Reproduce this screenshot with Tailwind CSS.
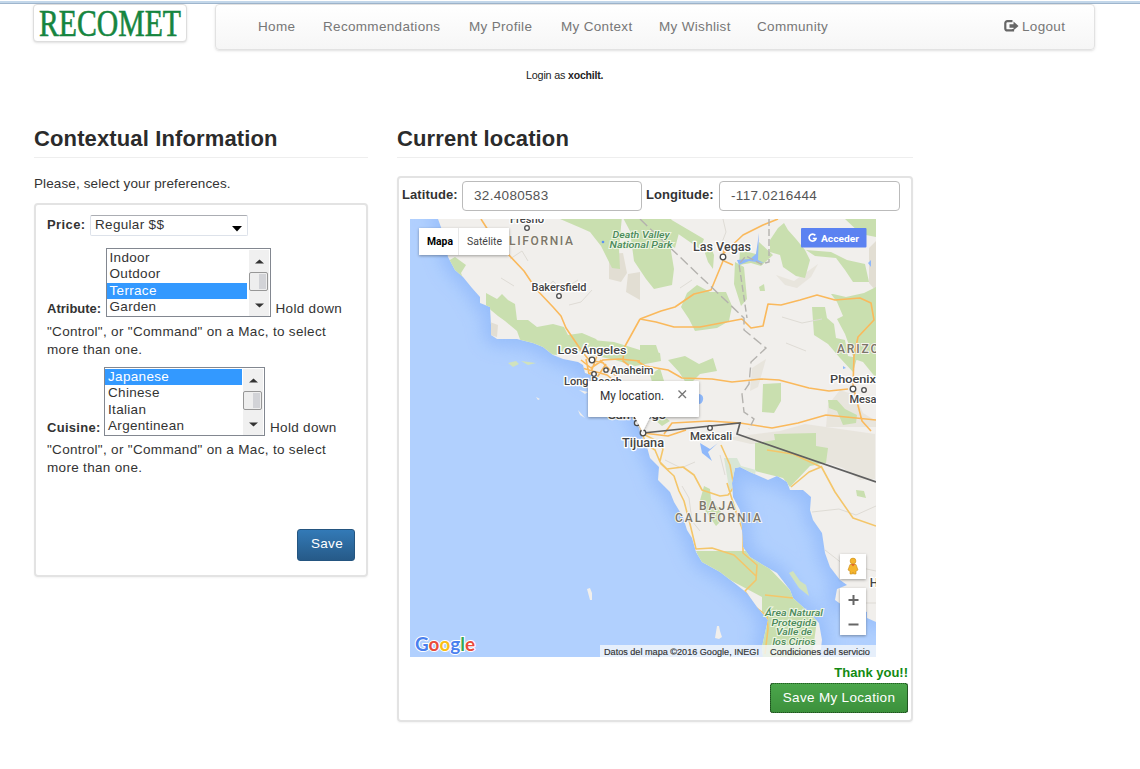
<!DOCTYPE html>
<html lang="en">
<head>
<meta charset="utf-8">
<title>Recomet</title>
<script src="https://cdn.jsdelivr.net/npm/@tailwindcss/browser@4"></script>
</head>
<body class="h-[769px] overflow-hidden bg-white font-['Liberation_Sans',Arial,sans-serif] text-[13.5px] leading-[18px] tracking-[0.32px] text-[#333]">
<div class="mt-px h-[3px] border-b border-[#9fb6cd] bg-[#c3d7ea]"></div>
<header class="flex items-start pl-[33px]">
  <div class="flex h-[38px] w-[154px] items-center justify-center rounded border border-[#ddd] bg-white shadow-sm">
    <svg class="shrink-0 overflow-visible" width="150" height="36" viewBox="0 0 150 36" aria-label="RECOMET"><text x="4" y="30.500" textLength="142" lengthAdjust="spacingAndGlyphs" font-family="Liberation Serif, serif" font-size="38" letter-spacing="0" fill="#16853f" stroke="#16853f" stroke-width=".6">RECOMET</text></svg>
  </div>
  <nav class="ml-[28px] flex h-[46px] w-[880px] items-center rounded border border-[#e2e2e2] bg-linear-to-b from-white to-[#f6f6f6] pl-[42px] text-[#777] shadow-sm shadow-black/10">
    <a class="w-[65px]">Home</a>
    <a class="w-[146px]">Recommendations</a>
    <a class="w-[92px]">My Profile</a>
    <a class="w-[98px]">My Context</a>
    <a class="w-[98px]">My Wishlist</a>
    <a class="w-[247px]">Community</a>
    <svg class="mb-[2px] mr-[3px]" width="15" height="12" viewBox="0 0 15 12"><path d="M8.500 1.200H3.500Q1.300 1.200 1.300 3.200v5.200Q1.300 10.400 3.500 10.400h5.500V9" fill="none" stroke="#666" stroke-width="2.200"/><path d="M5.500 4.300h4V1.500L14.500 6l-5 4.300V7.700h-4z" fill="#666"/></svg>
    <a>Logout</a>
  </nav>
</header>
<p class="ml-[526px] mt-[16px] h-[18px] text-[10.800px] leading-[18px] tracking-[-0.2px] text-[#222]">Login as <b class="text-[10.500px]">xochilt.</b></p>
<main class="flex gap-[29px] pl-[34px] pt-[40px]">
  <section class="w-[334px]">
    <h2 class="h-[34px] border-b border-[#eee] pt-[2px] text-[22px] font-bold leading-[26px] tracking-[0.130px] text-[#2b2b2b]">Contextual Information</h2>
    <p class="mt-[17px] tracking-[0.120px]">Please, select your preferences.</p>
    <form class="mt-[10px] flex h-[374px] flex-col rounded border-2 border-[#e3e3e3] pl-[11px] pr-[11px] pt-[10px] shadow-xs">
      <div class="flex h-[22px]">
        <b class="w-[43px] whitespace-nowrap pt-px text-[13px] tracking-[0.4px]">Price:</b>
        <div class="flex h-[21px] w-[158px] justify-between rounded-xs border border-[#dde2ea] border-t-[#abadb3] pl-[4px] pr-[5px]"><span>Regular $$</span>
          <svg class="mt-[10px]" width="10" height="6"><path d="M0 0h10L5 5.500z" fill="#000"/></svg></div>
      </div>
      <div class="mt-[11px] flex items-end">
        <b class="-mb-px w-[58.500px] whitespace-nowrap text-[13px] tracking-[0px]">Atribute:</b>
        <div class="flex h-[69px] w-[165px] border border-[#828790] pt-px leading-[16.400px]">
          <div class="w-[140px]"><p class="pl-[3px]">Indoor</p><p class="pl-[3px]">Outdoor</p><p class="bg-[#3399ff] pl-[3px] text-white">Terrace</p><p class="pl-[3px]">Garden</p></div>
          <svg class="ml-[2px]" width="20" height="66"><path d="M0 0h20v66H0z" fill="#f0f0f0"/><path d="M6 13.500l4.500-4 4.500 4zM6 53.500l4.500 4 4.500-4z" fill="#333"/><rect x=".5" y="22.500" width="18" height="18" rx="1.500" fill="#eee" stroke="#979797"/><path d="M10 24h7v15h-7z" fill="#d2d3d7"/></svg>
        </div>
        <span class="-mb-px ml-[5px]">Hold down</span>
      </div>
      <p class="mt-[6px] w-[310px]">"Control", or "Command" on a Mac, to select<br>more than one.</p>
      <div class="mt-[8px] flex items-end">
        <b class="-mb-px w-[57px] whitespace-nowrap text-[13px] tracking-[0.3px]">Cuisine:</b>
        <div class="flex h-[69px] w-[161px] border border-[#828790] pt-px leading-[16.400px]">
          <div class="w-[137px]"><p class="bg-[#3399ff] pl-[3px] text-white">Japanese</p><p class="pl-[3px]">Chinese</p><p class="pl-[3px]">Italian</p><p class="pl-[3px]">Argentinean</p></div>
          <svg class="ml-[1px]" width="20" height="66"><path d="M0 0h20v66H0z" fill="#f0f0f0"/><path d="M6 13.500l4.500-4 4.500 4zM6 53.500l4.500 4 4.500-4z" fill="#333"/><rect x=".5" y="22.500" width="18" height="18" rx="1.500" fill="#eee" stroke="#979797"/><path d="M10 24h7v15h-7z" fill="#d2d3d7"/></svg>
        </div>
        <span class="-mb-px ml-[5px]">Hold down</span>
      </div>
      <p class="mt-[5px] w-[310px]">"Control", or "Command" on a Mac, to select<br>more than one.</p>
      <button type="button" class="mt-[52px] h-[32px] w-[58px] self-end rounded-[3px] border border-[#245580] bg-linear-to-b from-[#337ab7] to-[#265a88] pb-[2px] pl-[2px] text-white">Save</button>
    </form>
  </section>
  <section class="w-[516px]">
    <h2 class="h-[34px] border-b border-[#eee] pt-[2px] text-[22px] font-bold leading-[26px] tracking-[0.130px] text-[#2b2b2b]">Current location</h2>
    <div class="mt-[18px] h-[546px] rounded border-2 border-[#e3e3e3] pl-[4px] pt-[3px] shadow-xs">
      <div class="flex">
        <b class="-ml-px w-[60px] whitespace-nowrap pt-[5px] text-[13px] tracking-[0.1px]">Latitude:</b>
        <div class="h-[30px] w-[180px] rounded border border-[#bbb] pl-[11px] pt-[5px] text-[#555]">32.4080583</div>
        <b class="ml-[4px] w-[73px] whitespace-nowrap pt-[5px] text-[13px] tracking-[0.05px]">Longitude:</b>
        <div class="h-[30px] w-[181px] rounded border border-[#bbb] pl-[11px] pt-[5px] text-[#555]">-117.0216444</div>
      </div>
      <svg class="ml-[7px] mt-[8px] block" width="466" height="438" viewBox="410 219 466 438" letter-spacing="0" font-family="Roboto, sans-serif">
        <defs>
          <filter id="soft" x="-20%" y="-20%" width="140%" height="140%"><feGaussianBlur stdDeviation="9"/></filter>
          <filter id="drop" x="-20%" y="-20%" width="140%" height="150%"><feDropShadow dx="0" dy="1" stdDeviation="1.500" flood-opacity=".35"/></filter>
          <path id="land" d="M438 219L442 230 448 257 455 270 463 277 472 288 480 297 480 303 490 307 491 325 491 335 497 339 517 339 533 343 543 347 553 355 563 359 578 362 583 365 585 373 597 377 612 389 624 402 635 418 641 434 647 447 650 458 659 467 658 480 664 486 670 492 674 502 677 507 683 517 687 530 692 538 696 552 702 562 720 572 733 582 747 593 757 607 768 620 765 633 762 647 763 657H820L822 640 819 623 813 617 803 607 793 598 790 590 777 573 763 565 750 557 743 547 742 530 740 510 733 497 732 483 735 468 740 467 750 472 768 480 777 476 787 482 790 490 803 490 811 497 810 510 813 520 822 533 825 553 830 567 840 580 847 585 837 589 835 600 842 605 867 612 867 618 876 622V219z"/>
          <clipPath id="landclip"><use href="#land"/></clipPath>
        </defs>
        <path fill="#b1d0fe" d="M410 219h466v438H410z"/>
        <use href="#land" fill="#8fb8fa" stroke="#8fb8fa" stroke-width="14" filter="url(#soft)" opacity=".8"/>
        <use href="#land" fill="#f1efec"/>
        <g clip-path="url(#landclip)">
          <g fill="#e2ded3">
            <path d="M609 254l14-1 4 20-6 9-12-3zM628 274l12-2v28l-14-8zM490 322l8 3-1 12-7-2zM869 248l7-7v50l-7-8z"/>
            <path opacity=".6" d="M776 275l18 6 24-17-7 13-14 11-12-3zM828 405l12-15 15 5 8 18 13 8v6h-50zM752 368l14-9-8 28-8 4zM725 438l55-7 25-7 70 10v45l-15 1-17-12-20-6-12-20-60 2z"/>
          </g>
          <g fill="#c9dfaf">
            <path d="M560 219l80 0 30 0 34 20-4 10-26-18-4 14 4 24-2 16-18 4-8-10-12-18-4-30-8-15-3 33 1 20-8-1-11-22-11-14-9-4z"/>
            <path d="M641 219h30l8 14-4 15-24-16zM455 257l11 8-5 8 4 10-9-8-8-14zM486 293l11 6 5-5 6 6 7 4 2 16 11 0 9 7 16-3 11 3 4 8 14-2 14 6 6 7-11 9-19-6-14 6-27-2-21-6 12-2-5-14-12-10-7-5-12-10z"/>
            <path d="M583 345l9-5 22 2 26 8 20 3 1 8-26 5-20-6-23-5zM681 307l6-14 10-8 13 7 16 0 6 14-3 15-12 7-22 3-6-12zM705 253l5-8 4 10-1 14-5-7zM735 262l9 5 3 32-6 7-7-22zM740 250l16 4 3-12 14 13-12 11-10-3-12 2zM770 240l8-12 6-5 4 7 8 9 9 11 5 10-5 18-9-2-13-9-3-12-10-3zM806 250l25 2 16 8 18 4 4 18-16 0-8-12-9-12-21-2zM845 219h31v18l-15-3zM759 287l5-3 1 7-5 0z"/>
            <path d="M833 294l13 3 18-4 12-6v91l-13-16-9-3-9-25-8-15 6-3-6-14-6-8zM812 307l13 0 2 11 7 6 2 14 9 2 3 16 9 2-4 14-13-14-12-14-14-9z"/>
            <path d="M668 360l17-4 14 8 14-6 4 13-17 3-12 12-9-14zM640 345l16 0 4 12-20 3zM763 384l18-1v18l-7 12-12-1zM828 400l9 0 8 9 12 6-1 8-13 2-6-14-8-3zM650 375l10-7 4 13 9 5-7 10-9 3zM655 420l8-4 7 5-8 5z"/>
            <path d="M755 443l20-3-1-6 42-1v13l12 2-2 15-16 3-20 21-7-9-28-7zM856 490l8 1 2 7-9-2zM704 486l6 3 1 10 10 13 0 9-5 5-9-13-8-9z"/>
            <path d="M696 551h52l20 16 24 25 12 13 13 15-5 37-50 0v-60l-60-32z"/>
          </g>
          <path fill="#d8e6d5" d="M724 458h13l4 8 15 4-2 9-16-10-2 28-7-9z"/>
          <g fill="none" stroke="#dedbd5" stroke-width="1">
            <path d="M510 259l12-8 6 10M545 290l8-9 9 9 16-10M569 305l12-3 11-12M501 278l13 8M723 219l3 13-5 13M680 288l12-8M782 317l20 6 20-4M786 343l20 8M665 460l16 8 14-6M682 486l7 12 3 23 8 10M720 455l5 20M812 512l27-3 17 6 20-9M825 550l18 14 33 7M840 603h36"/>
          </g>
          <g fill="none" stroke="#fab95c" stroke-width="1.600" stroke-linejoin="round">
            <path d="M481 219l7 11 20 24 16 17 12 18 17 18 8 9 5 12 15 22 8 10 15 3M581 360l10 8 12-8 16-1 21 2M590 375l8-22M596 379l10-15M582 368l25 7 16 13M586 359l4 20M600 360l24 24M640 319l-16 29-1 13 8 6M640 319l21-8 14-4 19-13 17-4 12-29 1-16M724 261l9 4M724 253l19-18 20-10 15-6M640 319l16 3 18 5 26 0 42-8 9 9 12-2 5-22 13 1 19-5 17-5 18 5 25-2 11 5 3 17-16 17-4 19-1 30 9 35 9 10M637 361l8 5 23 4 14 8 30 1 20 3 29-3 18 1 30 8 20 3 19-2M664 434l8-11 37-2 31 2 32 5 26-5 28-8 50 5M628 405l9 14 6 14 25 3 18-6"/>
            <path stroke="#f4c66a" d="M641 430l5 14 9 6 5 12 7 7 16-2 11 8 8 15 18 6 8-1 6-8-4-22-9-20M645 435l12 6 6 8-3 12M727 483l8 26 8 22 0 22 14 12-1 15-11 11 9 15 13 10 1 13-3 25M660 463l14 13 5 15 5 10 7 27 5 21 16-1 22 7 22 21M765 595l28 3M767 450l26 4 28 13-12 5-18 15M821 466l14 26 18 26 23 8"/>
          </g>
          <g fill="#8fb8fa"><path d="M737 260l13-1 6-5 3-21-1 27 6 3-15-2-10 4zM744 284l2 10M868 263l3-3v7zM700 443l10 6 8-6-10 9 4 9-10-8zM699 394q5 1 4 6-1 4-4 4zM843 366l3 2-3 1z"/></g>
          <g fill="none" stroke="#b4b2ae" stroke-width="1.400"><path stroke-dasharray="10 4" d="M640 219l104 99 0 12 22 18-15 14-2 22-7 10 2 18 10 7-5 10"/><path stroke-dasharray="7 3" d="M769 219v43l-8 2-15-8-7 8 8 54"/></g>
        </g>
        <g fill="none" stroke="#5f5f5f" stroke-width="1.700"><path d="M643 433l97-10-3 11 139 48"/></g>
        <path fill="#d0e2bd" d="M508 363l8-2 3 3-6 3zM521 361l15 2-8 2zM789 573l4-2 7 10 6 4 3 11-10-8z"/>
        <path fill="#f1efec" d="M587 589l3-1 2 5 0 7-2 0zM536 397l4 2-2 1zM579 390l9 2-3 2zM578 410l7 8-5-3zM717 626l2 0 1 5 2 6-3 2-4-1z"/>

        <g text-anchor="middle" fill="#444" font-size="11" stroke="#fff" stroke-width="2.500" paint-order="stroke" stroke-linejoin="round" font-weight="500">
          <text x="527" y="223" font-size="10.500" textLength="34" lengthAdjust="spacingAndGlyphs">Fresno</text>
          <text x="559" y="291" textLength="55" lengthAdjust="spacingAndGlyphs">Bakersfield</text>
          <text x="592" y="354" font-size="11.500" textLength="69" lengthAdjust="spacingAndGlyphs">Los Ángeles</text>
          <text x="632" y="374" font-size="10.500" textLength="43" lengthAdjust="spacingAndGlyphs">Anaheim</text>
          <text x="593" y="385" font-size="10.500" textLength="58" lengthAdjust="spacingAndGlyphs">Long Beach</text>
          <text x="637" y="419" font-size="11.500" textLength="58" lengthAdjust="spacingAndGlyphs">San Diego</text>
          <text x="643" y="447" font-size="12" textLength="42" lengthAdjust="spacingAndGlyphs">Tijuana</text>
          <text x="711" y="440" font-size="10.500" textLength="42" lengthAdjust="spacingAndGlyphs">Mexicali</text>
          <text x="722" y="251" font-size="12" textLength="58" lengthAdjust="spacingAndGlyphs">Las Vegas</text>
          <text x="853" y="383" font-size="11.500" textLength="46" lengthAdjust="spacingAndGlyphs">Phoenix</text>
          <text x="863" y="403" font-size="11" textLength="27" lengthAdjust="spacingAndGlyphs">Mesa</text>
          <text x="874" y="587" font-size="12">H</text>
        </g>
        <g fill="#7b7669" stroke="#f5f3ee" stroke-width="2" paint-order="stroke" font-size="12" font-weight="500">
          <text x="509" y="245" textLength="64">LIFORNIA</text>
          <text x="837" y="353" textLength="62">ARIZONA</text>
          <text x="699" y="510" textLength="36">BAJA</text>
          <text x="675" y="522" textLength="86">CALIFORNIA</text>
        </g>
        <g fill="#4b8a5a" stroke="#edf5e3" stroke-width="2" paint-order="stroke" font-size="9.500" font-style="italic" text-anchor="middle" font-weight="500">
          <text x="641" y="238" textLength="57" lengthAdjust="spacingAndGlyphs">Death Valley</text><text x="641" y="248" textLength="63" lengthAdjust="spacingAndGlyphs">National Park</text>
          <text x="794" y="616" textLength="58" lengthAdjust="spacingAndGlyphs">Área Natural</text><text x="794" y="626" textLength="45" lengthAdjust="spacingAndGlyphs">Protegida</text><text x="794" y="635" textLength="36" lengthAdjust="spacingAndGlyphs">Valle de</text><text x="794" y="645" textLength="43" lengthAdjust="spacingAndGlyphs">los Cirios</text>
        </g>
        <g fill="#fff" stroke="#4a4a4a" stroke-width="1.300"><circle cx="527" cy="228" r="2.300"/><circle cx="559" cy="296" r="2.300"/><circle cx="592" cy="360" r="2.800"/><circle cx="606" cy="370" r="2.200"/><circle cx="594" cy="374" r="2.300"/><circle cx="723" cy="257" r="2.800"/><circle cx="853" cy="389" r="2.800"/><circle cx="864" cy="390" r="2.300"/><circle cx="710" cy="428" r="2.300"/><circle cx="637" cy="423" r="2.600"/><circle cx="643" cy="433" r="2.800"/><circle cx="603" cy="242" r=".7" stroke="#5b93f5"/></g>

        <path d="M589 381h109q1 0 1 1v34q0 1-1 1H650L642.500 432 635 417H589q-1 0-1-1v-34q0-1 1-1z" fill="#fff" filter="url(#drop)"/>
        <text x="600" y="400" font-size="12" fill="#333" textLength="64" lengthAdjust="spacingAndGlyphs">My location.</text>
        <path d="M678.500 390.500l7.500 7.500m0-7.500l-7.500 7.500" stroke="#777" stroke-width="1.400"/>

        <path fill="#fff" filter="url(#drop)" d="M419 228h90v27h-90z"/><path stroke="#e8e8e8" d="M458.500 228v27"/>
        <text x="427" y="245" font-size="10" font-weight="700" fill="#000" textLength="26" lengthAdjust="spacingAndGlyphs">Mapa</text>
        <text x="467" y="245" font-size="10" fill="#444" textLength="35" lengthAdjust="spacingAndGlyphs">Satélite</text>
        <rect x="801" y="228" width="65.500" height="19.500" rx="1" fill="#5b82f1"/>
        <path d="M815.300 235.400a3.500 3.500 0 1 0 .7 3.100h-3.200" fill="none" stroke="#fff" stroke-width="1.700"/>
        <text x="821" y="241.500" font-size="9.800" font-weight="700" fill="#fff" textLength="38" lengthAdjust="spacingAndGlyphs">Acceder</text>

        <path fill="#fff" filter="url(#drop)" d="M840 554h26v25h-26zM840 588h26v47h-26z"/>
        <circle cx="853" cy="561" r="2.900" fill="#f5b52c" stroke="#c98b16" stroke-width=".6"/>
        <path d="M850 564.500h6l2 5.500-2 1v3h-2.500l-.5-2-.5 2H850v-3l-2-1z" fill="#f5b52c" stroke="#c98b16" stroke-width=".6"/><path d="M851 564h4l-2 2.500z" fill="#e0662a"/>
        <path d="M848.500 600h10m-5-5v10M848.500 624.500h10" stroke="#666" stroke-width="2"/>

        <g font-size="18" stroke="#fff" stroke-width="2" paint-order="stroke" font-family="Lato, sans-serif" font-weight="700"><text x="415" y="651" textLength="60" lengthAdjust="spacingAndGlyphs"><tspan fill="#4a80ee">G</tspan><tspan fill="#e94b3c">o</tspan><tspan fill="#fabf16">o</tspan><tspan fill="#4a80ee">g</tspan><tspan fill="#34a853">l</tspan><tspan fill="#e94b3c">e</tspan></text></g>
        <path fill="#f5f7fa" opacity=".78" d="M600 645h276v12H600z"/>
        <g font-size="8.500" fill="#333" stroke="#333" stroke-width=".15" font-family="Liberation Sans, sans-serif"><text x="604" y="654.500" textLength="155" lengthAdjust="spacingAndGlyphs">Datos del mapa ©2016 Google, INEGI</text><text x="770" y="654.500" textLength="100" lengthAdjust="spacingAndGlyphs">Condiciones del servicio</text></g>
      </svg>
      <div class="flex flex-col items-end pr-[3px] pt-[7px]">
        <b class="text-[13px] tracking-[0px] text-[#128a12]">Thank you!!</b>
        <button type="button" class="mt-px h-[30px] w-[138px] rounded-[3px] border border-dotted border-black bg-linear-to-b from-[#4ba64b] to-[#3c913c] pb-px text-white outline-1 -outline-offset-1 outline-dotted outline-[#245f24]">Save My Location</button>
      </div>
    </div>
  </section>
</main>
</body>
</html>
